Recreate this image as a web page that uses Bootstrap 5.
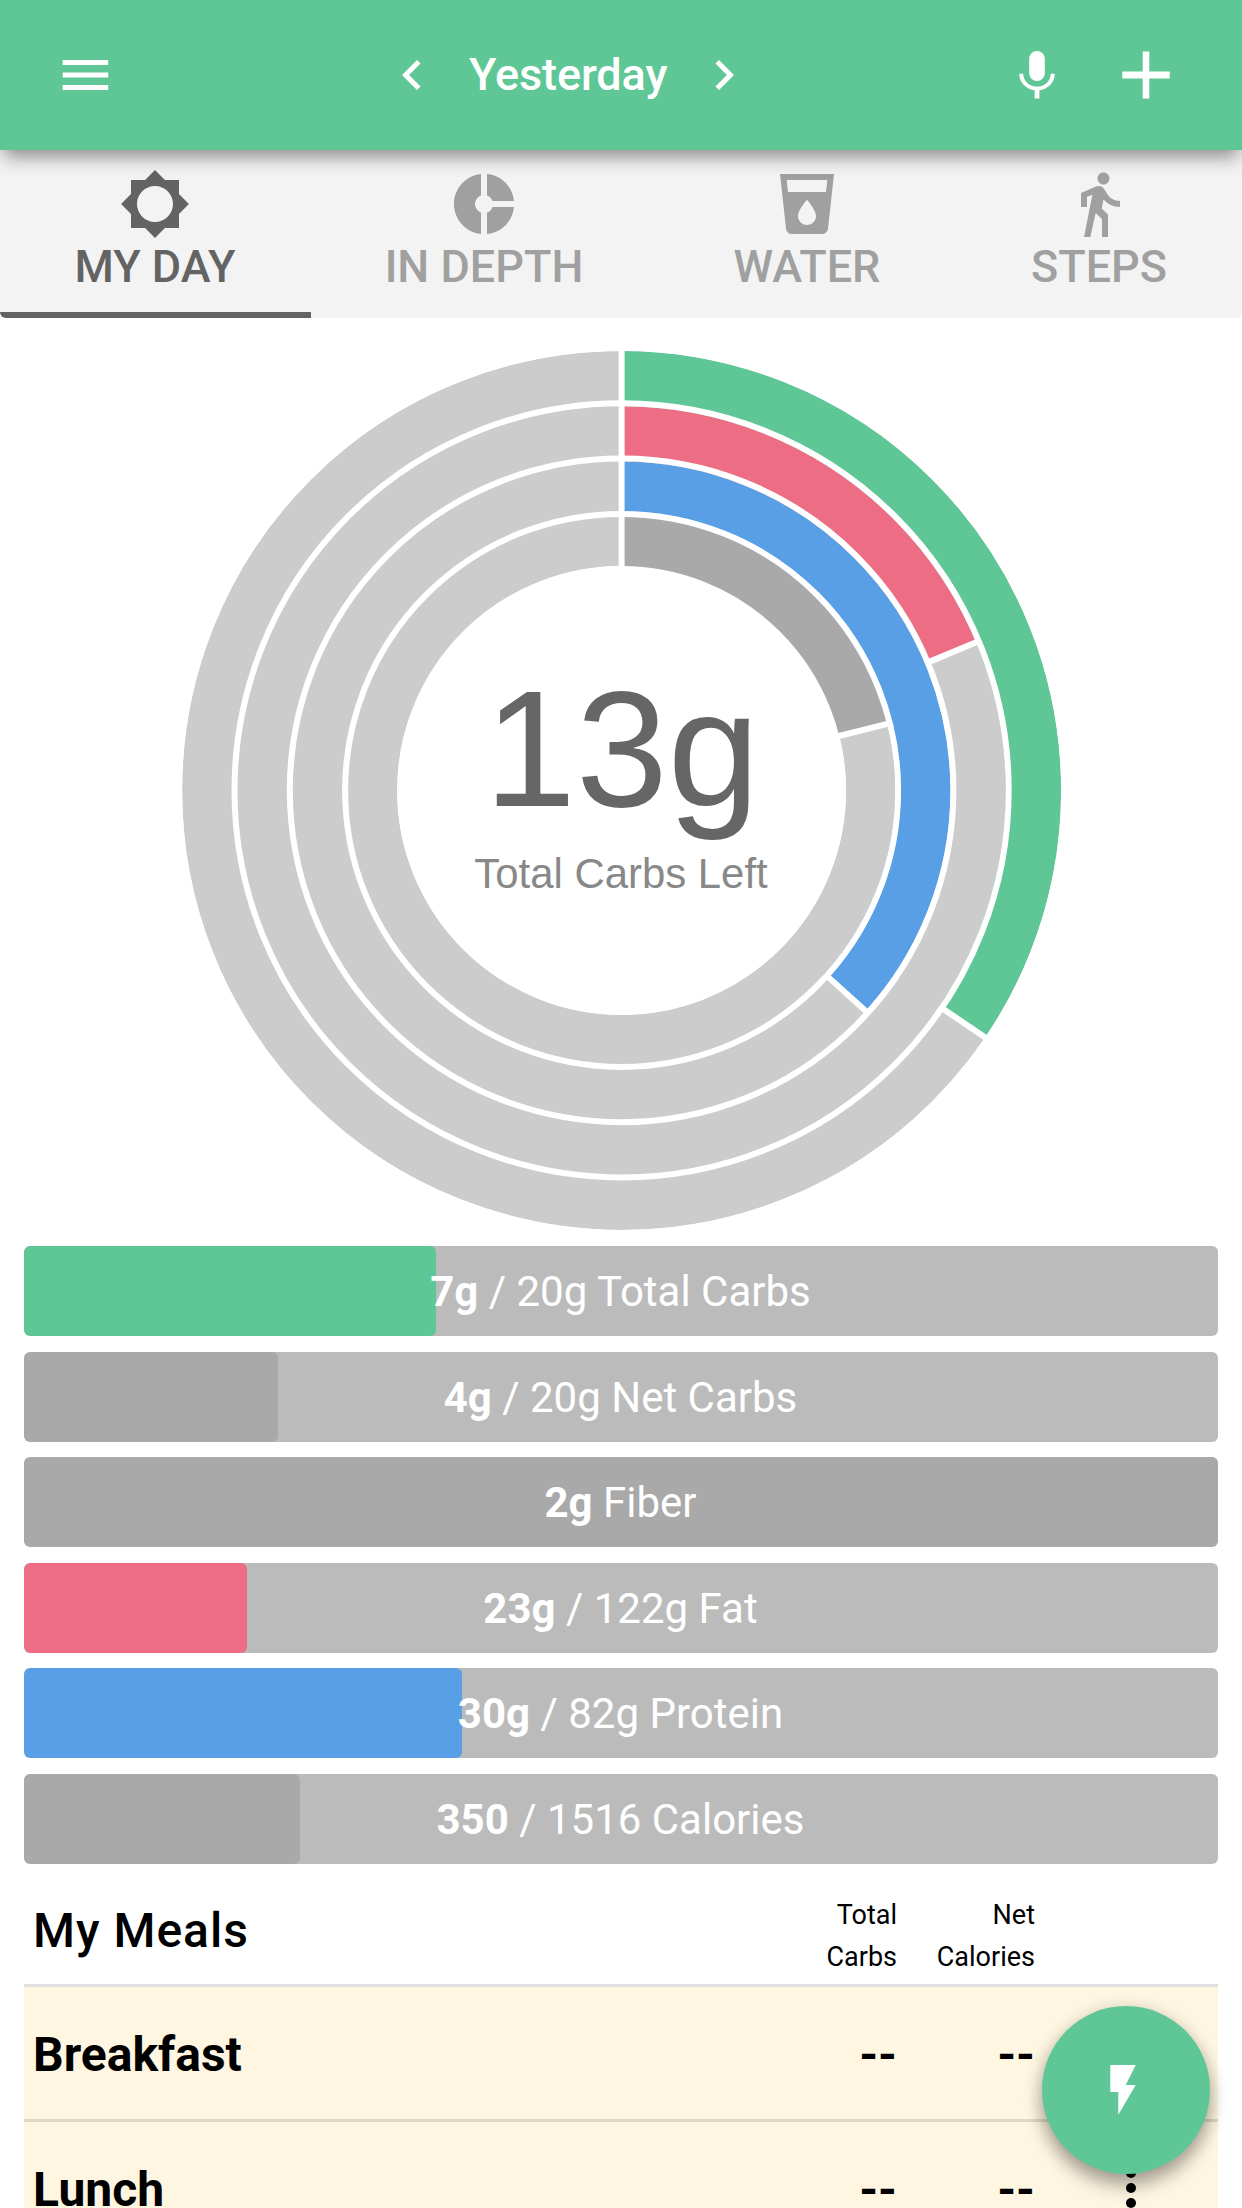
<!DOCTYPE html>
<html lang="en">
<head>
<meta charset="utf-8">
<meta name="viewport" content="width=device-width, initial-scale=1">
<title>My Day</title>
<link href="https://cdn.jsdelivr.net/npm/bootstrap@5.3.0/dist/css/bootstrap.min.css" rel="stylesheet">
<style>
  :root { --green:#5fc795; --pink:#ed6e84; --blue:#589fe5; --gray:#a9a9a9; }
  body { font-family: Roboto, "Liberation Sans", sans-serif; width:1242px; height:2208px; overflow:hidden; background:#fff; color:#000; }
  svg { display:block; flex-shrink:0; }
  .app-header { height:150px; background:var(--green); color:#fff; padding:0 72px 0 55px; box-shadow:0 10px 18px -4px rgba(0,0,0,.46); z-index:3; }
  .app-header button, .day-tabs button, .meal-line button { background:none; border:0; padding:0; color:inherit; }
  .header-side { width:327px; }
  .header-actions { gap:61px; }
  .day-title { font-size:45px; font-weight:500; line-height:54px; padding:0 27px; letter-spacing:-.1px; }
  .day-tabs { height:168px; background:#f3f3f3; border-radius:0 0 6px 6px; overflow:hidden; flex-wrap:nowrap; }
  .day-tabs .nav-link { color:#a0a0a0; font-size:45px; font-weight:500; line-height:54px; padding:18px 1px 0 0; border-radius:0; border-bottom:6px solid transparent; display:flex; flex-direction:column; align-items:center; height:168px; flex:none; }
  .day-tabs .nav-link.active { color:#636363; border-bottom-color:#636363; }
  .tab-day { width:311px; } .tab-depth { width:347px; } .tab-water { width:299px; } .tab-steps { width:285px; }
  .chart-area { height:928px; }
  .goal-list { padding:0 24px; gap:15.6px; }
  .goal-bar { height:90px; background:#bbb; border-radius:6px; font-size:42px; line-height:91px; color:#fff; overflow:hidden; position:relative; }
  .goal-bar .progress-bar { height:100%; border-radius:6px; }
  .goal-text { position:absolute; inset:0 1px 0 0; text-align:center; }
  .goal-text b { font-weight:700; }
  .bg-total { background:var(--green); } .bg-other { background:var(--gray); } .bg-fat { background:var(--pink); } .bg-protein { background:var(--blue); }
  .meal-table { padding:0 24px; }
  .meal-head { height:120px; padding:0 183px 0 9px; }
  .meal-title { font-size:48px; font-weight:500; letter-spacing:1px; line-height:56px; padding-top:39px; }
  .num-col { width:138px; text-align:right; flex:none; }
  .meal-head .num-col { font-size:27px; line-height:42px; padding-top:30px; }
  .meal-line { height:135px; background:#fef6e1; border-top:3px solid #e0d8c5; padding:5px 57px 0 9px; font-size:48px; line-height:56px; font-weight:700; }
  .meal-line.first-line { border-top-color:#dfdfdf; }
  .meal-line button { margin-left:66px; margin-top:-5px; }
  .quick-add { position:absolute; left:1042px; top:2006px; width:168px; height:168px; border-radius:50%; border:0; padding:0; background:var(--green); box-shadow:0 12px 18px rgba(0,0,0,.28), 0 3px 18px rgba(0,0,0,.16); z-index:4; }
</style>
</head>
<body class="position-relative">
<header class="app-header d-flex align-items-center position-relative">
  <div class="header-side">
    <button class="d-block" aria-label="Menu"><svg width="60" height="60" viewBox="0 0 60 60" fill="#fff"><path d="M7.700 15h45.500v5H7.700zM7.700 27.500h45.500v5H7.700zM7.700 40h45.500v5H7.700z"/></svg></button>
  </div>
  <button aria-label="Previous day"><svg width="60" height="60" viewBox="0 0 24 24" fill="#fff"><path d="M15.41 7.41L14 6l-6 6 6 6 1.41-1.41L10.83 12z"/></svg></button>
  <div class="day-title">Yesterday</div>
  <button aria-label="Next day"><svg width="60" height="60" viewBox="0 0 24 24" fill="#fff"><path d="M10 6L8.590 7.410 13.170 12l-4.580 4.590L10 18l6-6z"/></svg></button>
  <div class="d-flex align-items-center ms-auto header-actions">
    <button aria-label="Voice entry"><svg width="48" height="48" viewBox="0 0 48 48" fill="#fff"><rect x="16.200" y="0" width="15.600" height="30" rx="7.800"/><path d="M6.200 22.700C6.200 32 14 38.300 21.600 39.300V47.500h4.800V39.300C34 38.300 41.800 32 41.800 22.700H37.800C37.800 30 31.500 35.600 24 35.600S10.200 30 10.200 22.700z"/></svg></button>
    <button aria-label="Add"><svg width="48" height="48" viewBox="0 0 48 48" fill="#fff"><path d="M.3 20.500H20.700V.5H27.300V20.500H47.700V27.500H27.300V47.500H20.700V27.500H.3z"/></svg></button>
  </div>
</header>

<nav class="nav day-tabs">
  <button class="nav-link active tab-day"><svg width="72" height="72" viewBox="0 0 24 24" fill="currentColor"><path d="M20 15.31L23.31 12 20 8.69V4h-4.690L12 .69 8.690 4H4v4.690L.69 12 4 15.31V20h4.690L12 23.31 15.31 20H20v-4.690zM12 18c-3.310 0-6-2.690-6-6s2.690-6 6-6 6 2.690 6 6-2.690 6-6 6z"/></svg>MY DAY</button>
  <button class="nav-link tab-depth"><svg width="72" height="72" viewBox="0 0 24 24" fill="currentColor"><path d="M11 9.160V2c-5 .5-9 4.790-9 10s4 9.500 9 10v-7.160c-1-.41-2-1.520-2-2.840s1-2.430 2-2.840zM14.860 11H22c-.48-4.750-4-8.530-9-9v7.160c1 .3 1.520.98 1.860 1.840zM13 14.840V22c5-.47 8.520-4.250 9-9h-7.140c-.34.86-.86 1.540-1.860 1.840z"/></svg>IN DEPTH</button>
  <button class="nav-link tab-water"><svg width="72" height="72" viewBox="0 0 24 24" fill="currentColor"><path d="M3 2l2.010 18.230C5.130 21.230 5.970 22 7 22h10c1.030 0 1.870-.77 1.990-1.770L21 2H3zm9 17c-1.660 0-3-1.340-3-3 0-2 3-5.400 3-5.400s3 3.400 3 5.400c0 1.660-1.340 3-3 3zm6.330-11H5.670l-.44-4h13.550l-.45 4z"/></svg>WATER</button>
  <button class="nav-link tab-steps"><svg width="72" height="72" viewBox="0 0 24 24" fill="currentColor"><path d="M13.500 5.500c1.100 0 2-.9 2-2s-.9-2-2-2-2 .9-2 2 .9 2 2 2zM9.800 8.900L7 23h2.100l1.800-8 2.100 2v6h2v-7.500l-2.100-2 .6-3C14.800 12 16.800 13 19 13v-2c-1.900 0-3.500-1-4.300-2.400l-1-1.600c-.4-.6-1-1-1.700-1-.3 0-.5.1-.8.1L6 8.300V13h2V9.600l1.800-.7"/></svg>STEPS</button>
</nav>

<section class="chart-area">
  <svg width="1242" height="928" viewBox="0 318 1242 928">
    <g transform="translate(621.6 790.4) rotate(-90)" fill="none">
      <circle r="332" stroke="#ccc" stroke-width="215"/>
      <g stroke-width="55.300">
        <circle r="411.800" pathLength="1000" stroke="#5fc795" stroke-dasharray="345 655"/>
        <circle r="356.500" pathLength="1000" stroke="#ed6e84" stroke-dasharray="187 813"/>
        <circle r="301.200" pathLength="1000" stroke="#589fe5" stroke-dasharray="367 633"/>
        <circle r="245.900" pathLength="1000" stroke="#a9a9a9" stroke-dasharray="211 789"/>
      </g>
      <g stroke="#fff" stroke-width="6">
        <circle r="442.500"/><circle r="387.100"/><circle r="331.800"/><circle r="276.500"/><circle r="219.300" stroke-width="10"/>
        <path d="M214 0H445"/>
        <path d="M387 0H445" transform="rotate(124.200)"/>
        <path d="M332 0H387" transform="rotate(67.320)"/>
        <path d="M277 0H332" transform="rotate(132.100)"/>
        <path d="M219 0H277" transform="rotate(75.960)"/>
      </g>
    </g>
    <g font-family="'Liberation Sans', Arial, sans-serif" text-anchor="middle">
      <text x="622" y="806" font-size="165" fill="#666">13g</text>
      <text x="621" y="888" font-size="41.900" fill="#888">Total Carbs Left</text>
    </g>
  </svg>
</section>

<section class="goal-list d-flex flex-column">
  <div class="goal-bar"><div class="progress-bar bg-total" style="width:34.5%"></div><div class="goal-text"><b>7g</b> / 20g Total Carbs</div></div>
  <div class="goal-bar"><div class="progress-bar bg-other" style="width:21.26%"></div><div class="goal-text"><b>4g</b> / 20g Net Carbs</div></div>
  <div class="goal-bar"><div class="progress-bar bg-other" style="width:100%"></div><div class="goal-text"><b>2g</b> Fiber</div></div>
  <div class="goal-bar"><div class="progress-bar bg-fat" style="width:18.67%"></div><div class="goal-text"><b>23g</b> / 122g Fat</div></div>
  <div class="goal-bar"><div class="progress-bar bg-protein" style="width:36.68%"></div><div class="goal-text"><b>30g</b> / 82g Protein</div></div>
  <div class="goal-bar"><div class="progress-bar bg-other" style="width:23.09%"></div><div class="goal-text"><b>350</b> / 1516 Calories</div></div>
</section>

<section class="meal-table">
  <div class="meal-head d-flex">
    <div class="meal-title flex-grow-1">My Meals</div>
    <div class="num-col">Total<br>Carbs</div>
    <div class="num-col">Net<br>Calories</div>
  </div>
  <div class="meal-line first-line d-flex align-items-center">
    <div class="flex-grow-1">Breakfast</div><div class="num-col">--</div><div class="num-col">--</div>
    <button aria-label="Breakfast options"><svg width="60" height="60" viewBox="0 0 60 60"><circle cx="30" cy="15" r="5"/><circle cx="30" cy="30" r="5"/><circle cx="30" cy="45" r="5"/></svg></button>
  </div>
  <div class="meal-line d-flex align-items-center">
    <div class="flex-grow-1">Lunch</div><div class="num-col">--</div><div class="num-col">--</div>
    <button aria-label="Lunch options"><svg width="60" height="60" viewBox="0 0 60 60"><circle cx="30" cy="15" r="5"/><circle cx="30" cy="30" r="5"/><circle cx="30" cy="45" r="5"/></svg></button>
  </div>
</section>

<button class="quick-add d-flex" aria-label="Quick add"><svg width="168" height="168" viewBox="0 0 168 168" fill="#fff"><path d="M68.300 59H93.700L83.700 79H93.700L76.300 108.700V86H68.300z"/></svg></button>
<script src="https://cdn.jsdelivr.net/npm/bootstrap@5.3.0/dist/js/bootstrap.bundle.min.js"></script>
</body>
</html>
